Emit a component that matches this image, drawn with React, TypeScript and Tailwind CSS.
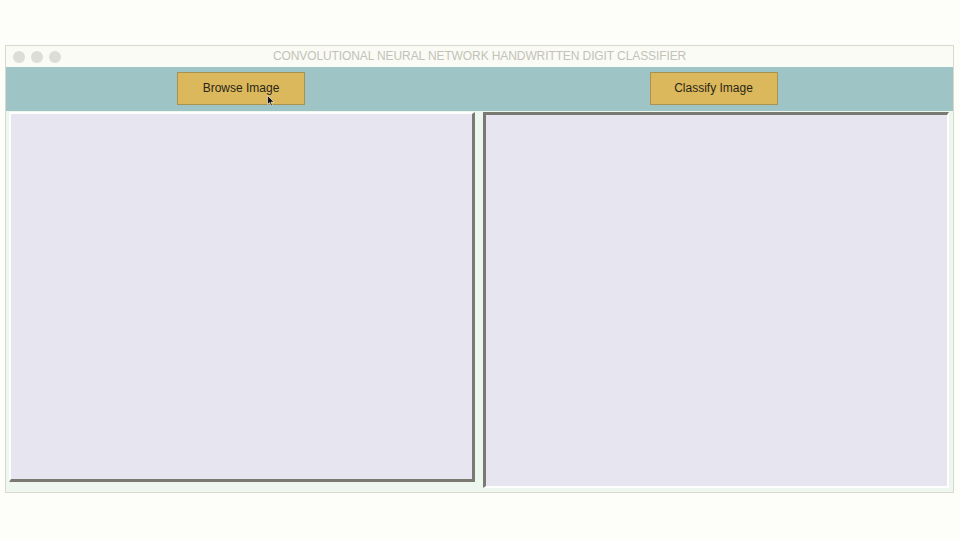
import React from 'react';

const font = { fontFamily: '"Liberation Sans", Arial, sans-serif' };

const App: React.FC = () => {
  return (
    <div className="w-[960px] h-[540px] bg-[#fdfdf9] pt-[45px] pl-[5px]" style={font}>
      <div className="w-[949px] h-[448px] border border-[#d6d9cc] flex flex-col bg-[#f4f8f0]">
        {/* Title bar */}
        <div className="relative h-[21px] flex items-center justify-center bg-[#fbfbf5]">
          <div className="absolute left-[7px] top-[5px] flex gap-[6px]">
            <span className="w-[12px] h-[12px] rounded-full bg-[#dcdcd8]"></span>
            <span className="w-[12px] h-[12px] rounded-full bg-[#dcdcd8]"></span>
            <span className="w-[12px] h-[12px] rounded-full bg-[#dcdcd8]"></span>
          </div>
          <span className="text-[12px] tracking-[-0.1px] text-[#c2c2b8]">
            CONVOLUTIONAL NEURAL NETWORK HANDWRITTEN DIGIT CLASSIFIER
          </span>
        </div>

        {/* Toolbar */}
        <div className="h-[45px] bg-[#9fc4c6] grid grid-cols-[470px_1fr] items-start pt-[5px]">
          <div className="flex justify-center">
            <button className="relative w-[128px] h-[33px] bg-[#dcb85c] border border-[#a89250] text-[12px] text-[#2a2618] font-medium">
              Browse Image
              <svg className="absolute left-[89px] top-[22px]" width="8" height="12" viewBox="0 0 8 12">
                <path d="M0.5 0.5 L0.5 9.5 L2.6 7.6 L4 11 L5.4 10.4 L4 7.1 L7 7.1 Z" fill="#111" stroke="#fff" strokeWidth="0.6" />
              </svg>
            </button>
          </div>
          <div className="flex justify-center pr-[2px]">
            <button className="w-[128px] h-[33px] bg-[#dcb85c] border border-[#a89250] text-[12px] text-[#2a2618] font-medium">
              Classify Image
            </button>
          </div>
        </div>

        {/* Panels */}
        <div className="flex-1 flex gap-[8px] pl-[3px] pr-[4px] pt-[1px] pb-[4px] bg-[#eef6f0]">
          <div className="w-[466px] h-[370px] bg-[#e7e5f0] border-t-[2px] border-l-[2px] border-b-[3px] border-r-[3px] border-t-white border-l-white border-b-[#7a7a72] border-r-[#7a7a72]"></div>
          <div className="flex-1 h-[376px] bg-[#e7e5f0] border-t-[3px] border-l-[3px] border-b-[2px] border-r-[2px] border-t-[#7a7a72] border-l-[#7a7a72] border-b-white border-r-white"></div>
        </div>
      </div>
    </div>
  );
};

export default App;
